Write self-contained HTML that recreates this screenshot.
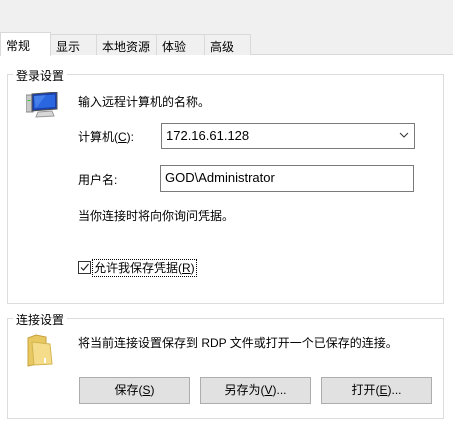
<!DOCTYPE html>
<html><head><meta charset="utf-8"><style>
*{margin:0;padding:0;box-sizing:border-box}
body{width:453px;height:427px;background:#fff;font-family:"Liberation Sans","Microsoft YaHei","Noto Sans CJK SC",sans-serif;font-size:12px;color:#000;position:relative;overflow:hidden}
.a{position:absolute;white-space:nowrap}
.top{position:absolute;left:0;top:0;width:453px;height:55px;background:#f0f0f0;border-bottom:1px solid #d9d9d9}
.tab{position:absolute;top:34px;height:21px;border:1px solid #d9d9d9;border-bottom:none;background:#f0f0f0;padding:3px 0 0 5px;font-size:12px}
.grp{position:absolute;border:1px solid #dcdcdc}
.leg{position:absolute;background:#fff;padding:0 3px}
.btn{position:absolute;top:377px;width:111px;height:27px;background:#e1e1e1;border:1px solid #adadad;text-align:center;line-height:25px}
.inp{position:absolute;border:1px solid #7a7a7a;background:#fff;padding-left:4px;font-size:13px;line-height:23px}
</style></head><body>
<div class="top"></div>
<div class="tab" style="left:50px;width:47px">显示</div>
<div class="tab" style="left:96px;width:61px">本地资源</div>
<div class="tab" style="left:156px;width:49px">体验</div>
<div class="tab" style="left:204px;width:47px">高级</div>
<div class="tab" style="left:0;top:32px;width:51px;height:24px;background:#fff;padding-top:4px">常规</div>

<div class="grp" style="left:7px;top:74px;width:437px;height:230px"></div>
<div class="a leg" style="left:13px;top:67px">登录设置</div>
<svg class="a" style="left:26px;top:92px" width="34" height="28" viewBox="0 0 34 28">
<rect x="0" y="3" width="7" height="17" fill="#c8c8c8" stroke="#888"/>
<rect x="1.5" y="8" width="3" height="1" fill="#3c3"/>
<polygon points="6,2 31,0 31,17 6,19" fill="#1a3fa8" stroke="#555"/>
<polygon points="8,4 29,2.5 29,15 8,16.5" fill="#2a66e0"/>
<polygon points="8,4 20,3 10,16" fill="#5a90f0" opacity=".6"/>
<path d="M12 20 L26 19 L28 24 L10 25Z" fill="#d8d8d8" stroke="#999"/>
</svg>
<div class="a" style="left:78px;top:93px">输入远程计算机的名称。</div>
<div class="a" style="left:78px;top:128px">计算机(<u>C</u>):</div>
<div class="inp" style="left:161px;top:123px;width:254px;height:26px">172.16.61.128</div>
<svg class="a" style="left:399px;top:132px" width="10" height="7"><path d="M1 1L5 5L9 1" fill="none" stroke="#333"/></svg>
<div class="a" style="left:78px;top:171px">用户名:</div>
<div class="inp" style="left:160px;top:165px;width:254px;height:27px;line-height:24px">GOD\Administrator</div>
<div class="a" style="left:78px;top:207px">当你连接时将向你询问凭据。</div>
<div class="a" style="left:78px;top:261px;width:13px;height:13px;border:1px solid #333;background:#fff"></div>
<svg class="a" style="left:79px;top:262px" width="11" height="11"><path d="M2 5.5L4.5 8L9.5 2" fill="none" stroke="#222" stroke-width="1.2"/></svg>
<div class="a" style="left:92px;top:259px;border:1px dotted #000;padding:0 1px;line-height:16px">允许我保存凭据(<u>R</u>)</div>

<div class="grp" style="left:7px;top:318px;width:437px;height:101px"></div>
<div class="a leg" style="left:13px;top:311px">连接设置</div>
<svg class="a" style="left:26px;top:334px" width="32" height="34" viewBox="0 0 32 34">
<path d="M2 4 L10 1 L20 3 L20 28 L2 32Z" fill="#e8c860" stroke="#c8a040"/>
<path d="M6 8 L24 10 L26 30 L8 31Z" fill="#f4dc8a" stroke="#d4b450"/>
<rect x="18" y="24" width="2" height="5" fill="#fff"/>
</svg>
<div class="a" style="left:78px;top:334px">将当前连接设置保存到 RDP 文件或打开一个已保存的连接。</div>
<div class="btn" style="left:79px">保存(<u>S</u>)</div>
<div class="btn" style="left:200px">另存为(<u>V</u>)...</div>
<div class="btn" style="left:321px">打开(<u>E</u>)...</div>
</body></html>
